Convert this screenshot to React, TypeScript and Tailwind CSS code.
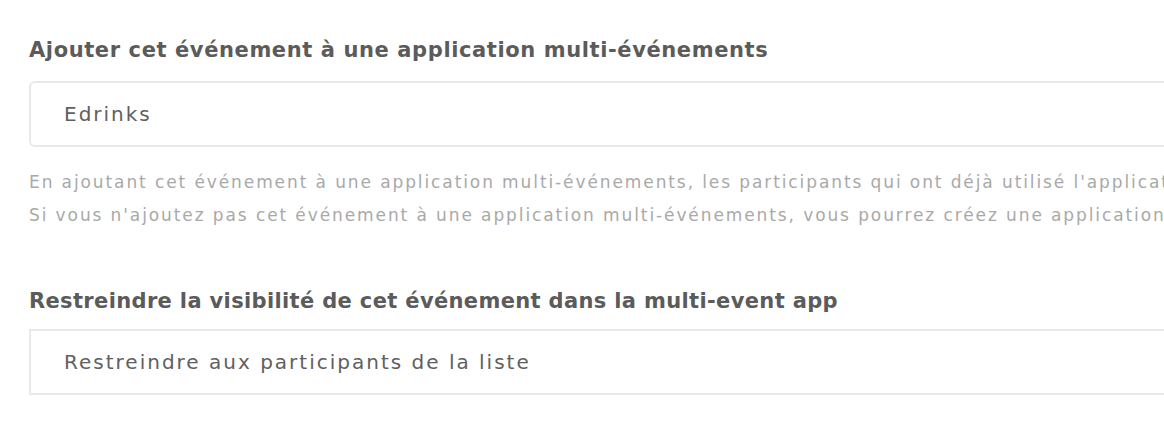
export default function App() {
  return (
    <div className="h-[432px] w-[1164px] overflow-hidden bg-white font-['DejaVu_Sans',sans-serif]">
      <div className="w-[1400px] pl-[29px] pt-[36px]">
        <p className="text-[21px] font-bold leading-[28px] tracking-[0.6px] text-[#5b5b5b]">
          Ajouter cet événement à une application multi-événements
        </p>
        <div className="mt-[17px] flex h-[66px] items-center rounded-[6px] border-2 border-[#e8e8e8] pl-[33px] text-[20px] tracking-[2px] text-[#606060]">
          Edrinks
        </div>
        <div className="mt-[23px] flex flex-col gap-[9px] whitespace-nowrap text-[17px] leading-[24px] tracking-[1.9px] text-[#a9a9a9]">
          <p>
            En ajoutant cet événement à une application multi-événements, les participants qui ont déjà utilisé l'application pourront accéder à cet événement.
          </p>
          <p>
            Si vous n'ajoutez pas cet événement à une application multi-événements, vous pourrez créez une application dédiée à cet événement.
          </p>
        </div>
        <p className="mt-[60px] text-[21px] font-bold leading-[28px] tracking-[0.35px] text-[#5b5b5b]">
          Restreindre la visibilité de cet événement dans la multi-event app
        </p>
        <div className="mt-[14px] flex h-[66px] items-center border-2 border-[#e8e8e8] pl-[33px] text-[20px] tracking-[2px] text-[#606060]">
          Restreindre aux participants de la liste
        </div>
      </div>
    </div>
  );
}
